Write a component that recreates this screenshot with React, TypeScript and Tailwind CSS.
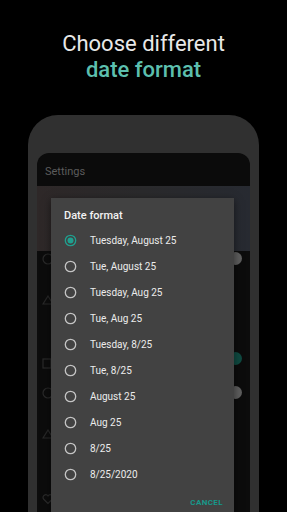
import React from "react";

const formats = [
  "Tuesday, August 25",
  "Tue, August 25",
  "Tuesday, Aug 25",
  "Tue, Aug 25",
  "Tuesday, 8/25",
  "Tue, 8/25",
  "August 25",
  "Aug 25",
  "8/25",
  "8/25/2020",
];

const Radio: React.FC<{ checked: boolean }> = ({ checked }) => (
  <svg width="13" height="13" viewBox="0 0 13 13">
    <circle
      cx="6.5"
      cy="6.5"
      r="5.2"
      fill="none"
      stroke={checked ? "#1fa08f" : "#c4c4c4"}
      strokeWidth="1.3"
    />
    {checked && <circle cx="6.5" cy="6.5" r="3" fill="#1fa08f" />}
  </svg>
);

const App: React.FC = () => {
  return (
    <div
      className="w-[287px] h-[512px] overflow-hidden bg-black flex flex-col"
      style={{ fontFamily: "Roboto, 'Noto Sans', sans-serif" }}
    >
      {/* Headline */}
      <div className="pt-[31px] h-[115px] text-center">
        <div className="text-[22px] leading-[26px] text-[#e8e8e8]">
          Choose different
        </div>
        <div className="text-[22px] leading-[26px] font-medium text-[#5cbfae]">
          date format
        </div>
      </div>

      {/* Phone frame */}
      <div className="relative ml-[28px] w-[231px] flex-1 rounded-t-[30px] bg-[#303030] pt-[38px] px-[9px] flex flex-col">
        <div className="flex-1 flex flex-col rounded-t-[12px] overflow-hidden">
          <div className="h-[33px] bg-[#0b0b0b] px-[8px] pt-[6px] flex items-center">
            <span className="text-[11px] text-[#5c5c5c]">Settings</span>
          </div>
          <div className="h-[65px] bg-gradient-to-r from-[#2e2828] via-[#2a2a2c] to-[#272a31]" />
          <div className="relative flex-1 bg-[#0c0c0c]">
            {/* faded setting icons behind the scrim */}
            <div className="absolute left-[5px] top-0 flex flex-col">
              <svg className="mt-[2px]" width="12" height="12" viewBox="0 0 12 12">
                <circle cx="6" cy="6" r="5" fill="none" stroke="#2a2a2a" strokeWidth="1.2" />
              </svg>
              <svg className="mt-[30px]" width="12" height="10" viewBox="0 0 12 10">
                <path d="M6 1 L11 9 L1 9 Z" fill="none" stroke="#282828" strokeWidth="1.2" />
              </svg>
              <svg className="mt-[52px]" width="10" height="12" viewBox="0 0 10 12">
                <rect x="1" y="2" width="8" height="9" fill="none" stroke="#2a2a2a" strokeWidth="1.2" />
              </svg>
              <svg className="mt-[18px]" width="12" height="12" viewBox="0 0 12 12">
                <circle cx="6" cy="6" r="5" fill="none" stroke="#2a2a2a" strokeWidth="1.2" />
              </svg>
              <svg className="mt-[30px]" width="12" height="10" viewBox="0 0 12 10">
                <path d="M6 1 L11 9 L1 9 Z" fill="none" stroke="#282828" strokeWidth="1.2" />
              </svg>
              <svg className="mt-[54px]" width="12" height="12" viewBox="0 0 12 12">
                <path d="M6 10.5 L1.5 6 A2.6 2.6 0 0 1 6 3 A2.6 2.6 0 0 1 10.5 6 Z" fill="none" stroke="#2a2a2a" strokeWidth="1.2" />
              </svg>
            </div>
            {/* toggle knobs peeking on the right */}
            <div className="absolute right-[8px] top-[1px] w-[13px] h-[13px] rounded-full bg-[#5e5e5e]" />
            <div className="absolute right-[8px] top-[101px] w-[13px] h-[13px] rounded-full bg-[#0f4a41]" />
            <div className="absolute right-[8px] top-[135px] w-[13px] h-[13px] rounded-full bg-[#5e5e5e]" />
          </div>
        </div>

        {/* Dialog */}
        <div className="absolute left-[23px] top-[83px] w-[183px] h-[320px] bg-[#424242] shadow-[0_2px_8px_rgba(0,0,0,0.5)]">
          <div className="pl-[13px] pt-[11px] text-[11px] leading-[13px] font-medium text-[#f2f2f2]">
            Date format
          </div>
          <div className="mt-[5px] flex flex-col">
            {formats.map((f, i) => (
              <div key={f} className="h-[26px] flex items-center pl-[13px]">
                <Radio checked={i === 0} />
                <span className="ml-[13px] text-[10px] text-[#ececec]">{f}</span>
              </div>
            ))}
          </div>
          <div className="flex justify-end pr-[11px] mt-[10px]">
            <span className="text-[8px] font-bold tracking-[0.4px] text-[#17988a]">
              CANCEL
            </span>
          </div>
        </div>
      </div>
    </div>
  );
};

export default App;
